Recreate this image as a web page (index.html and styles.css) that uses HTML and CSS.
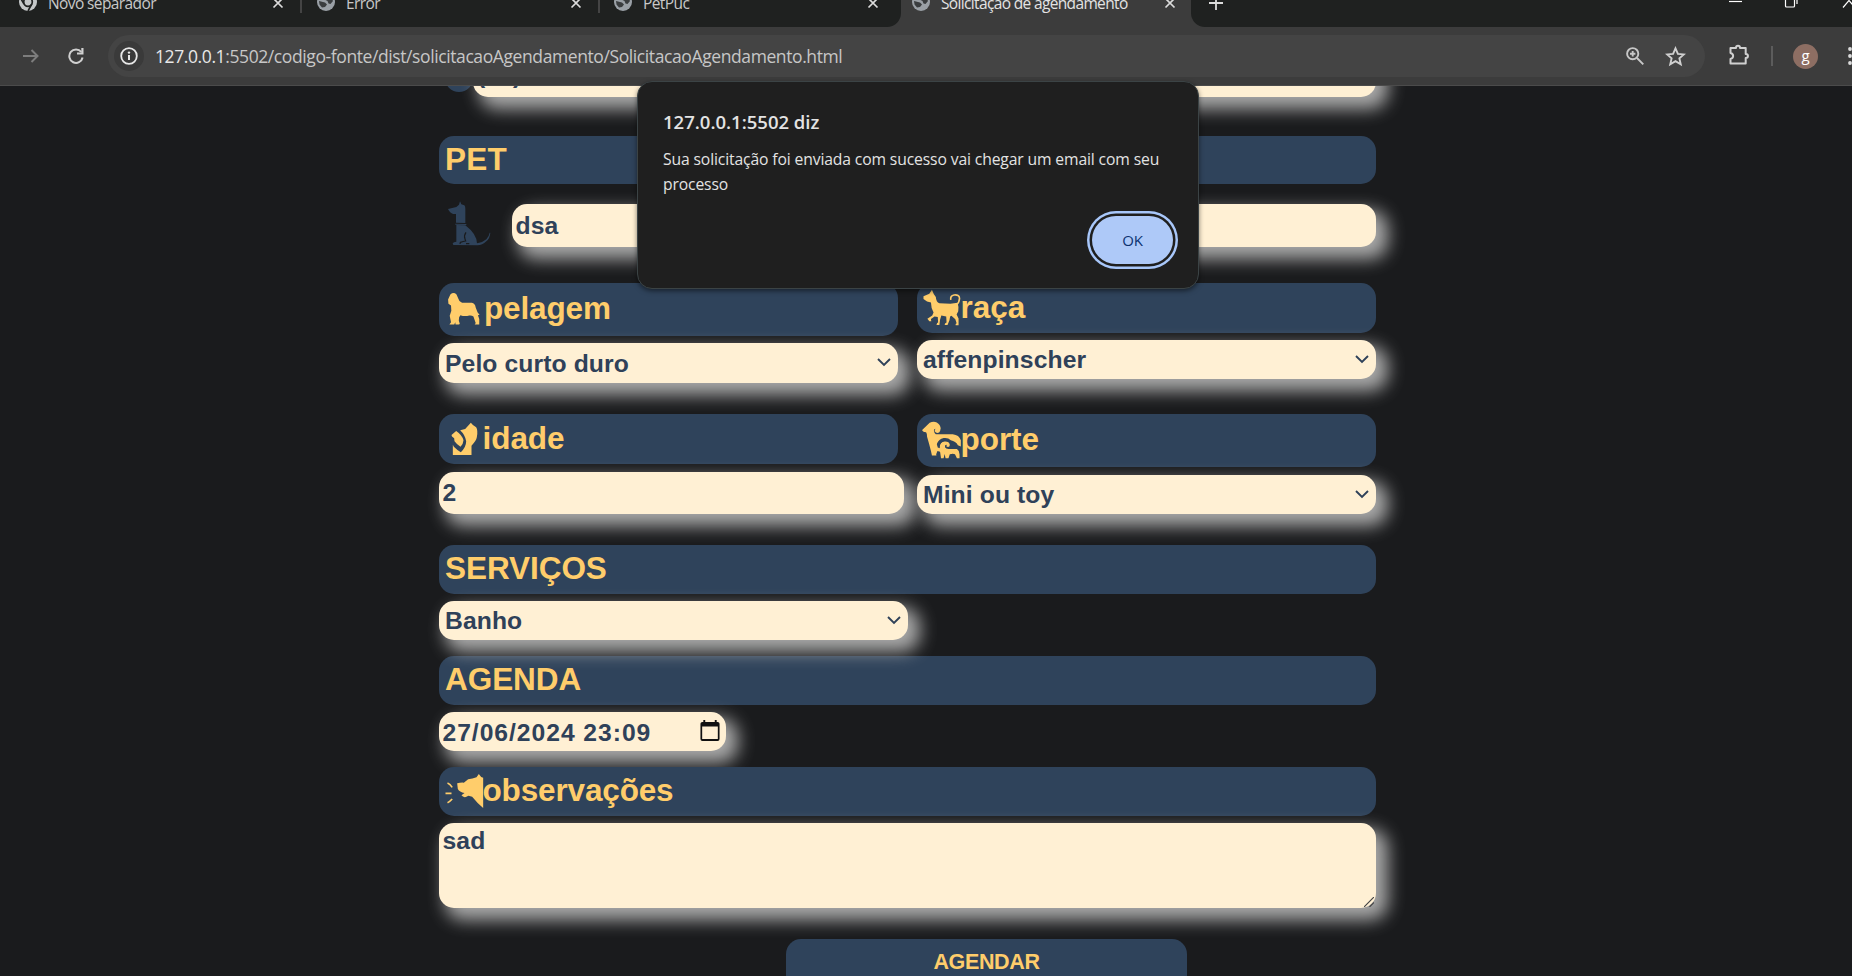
FILE: index.html
```html
<!DOCTYPE html>
<html lang="pt">
<head>
<meta charset="utf-8">
<title>Solicitação de agendamento</title>
<link rel="stylesheet" href="styles.css">
</head>
<body>
<svg class="defs" width="0" height="0">
  <symbol id="globe" viewBox="0 0 18 18"><circle cx="9" cy="9" r="9" fill="#9aa0a6"/><path d="M2 8l6 1.500 2 2-2 2.500-3 .5-2.500-3zM8 4l6 0 2 4-2.500 3-2-.5-1-2.500-3-1.500z" fill="#3a3d3f"/></symbol>
  <symbol id="close" viewBox="0 0 12 12"><path d="M1.500 1.500l9 9M10.500 1.500l-9 9" stroke="#dcdcdc" stroke-width="1.700"/></symbol>
  <symbol id="chev" viewBox="0 0 14 9"><path d="M1 1l6 6 6-6" fill="none" stroke="#2f4159" stroke-width="1.900"/></symbol>
</svg>
<div class="browser">
  <header class="chrome">
    <div class="tabstrip">
      <div class="tab tab-a"><svg class="fav" viewBox="0 0 18 18"><circle cx="9" cy="9" r="9" fill="#c4c7c8"/><circle cx="9" cy="9" r="4.300" fill="#c4c7c8" stroke="#1f2120" stroke-width="1.700"/><path d="M5 11L1.500 5M12.800 11L9 18M9 4.700h8" stroke="#1f2120" stroke-width="1.600"/></svg><span>Novo separador</span><svg class="x"><use href="#close"/></svg></div>
      <div class="tab tab-b"><svg class="fav"><use href="#globe"/></svg><span>Error</span><svg class="x"><use href="#close"/></svg></div>
      <div class="tab tab-c"><svg class="fav"><use href="#globe"/></svg><span>PetPuc</span><svg class="x"><use href="#close"/></svg></div>
      <div class="tab tab-d"><svg class="fav"><use href="#globe"/></svg><span>Solicitação de agendamento</span><svg class="x"><use href="#close"/></svg></div>
      <div class="rest">
        <svg class="plus" viewBox="0 0 14 14"><path d="M7 0v14M0 7h14" stroke="#dcdcdc" stroke-width="1.800"/></svg>
        <svg class="win" viewBox="0 0 123 20"><path d="M0 10.500h13" stroke="#fff" stroke-width="1.200"/><path d="M56.500 6h9v9a1 1 0 0 1-1 1h-7a1 1 0 0 1-1-1zM68 3v10" fill="none" stroke="#fff" stroke-width="1.200"/><path d="M114 16.500l12-14M114 2.500l12 14" stroke="#fff" stroke-width="1.200"/></svg>
      </div>
    </div>
    <div class="toolbar">
      <svg class="arrow" viewBox="0 0 16 14"><path d="M0 7h14M8.500 1l6 6-6 6" fill="none" stroke="#7d7d7d" stroke-width="2"/></svg>
      <svg class="reload" viewBox="0 0 16 16"><path d="M13.300 4A6.700 6.700 0 1 0 14.600 9.500" fill="none" stroke="#d0d0d0" stroke-width="2"/><path d="M15.500 0v6.500H9V4.600h4.300V0z" fill="#d0d0d0"/></svg>
      <div class="omnibox">
        <span class="info"><svg viewBox="0 0 18 18"><circle cx="9" cy="9" r="7.800" fill="none" stroke="#e8e8e8" stroke-width="1.800"/><path d="M9 8v5" stroke="#e8e8e8" stroke-width="2"/><circle cx="9" cy="5.600" r="1.200" fill="#e8e8e8"/></svg></span>
        <span class="url"><b>127.0.0.1</b>:5502/codigo-fonte/dist/solicitacaoAgendamento/SolicitacaoAgendamento.html</span>
        <svg class="mag" viewBox="0 0 18 18"><circle cx="6.700" cy="6.700" r="5.600" fill="none" stroke="#c7c7c7" stroke-width="1.900"/><path d="M6.700 4v5.400M4 6.700h5.400M11 11l6.300 6.300" stroke="#c7c7c7" stroke-width="1.900"/></svg>
        <svg class="star" viewBox="0 0 20 20"><path d="M10 2.200l2.300 5.300 5.700.5-4.300 3.800 1.300 5.600-5-3-5 3 1.300-5.600L2 8l5.700-.5z" fill="none" stroke="#d0d0d0" stroke-width="1.800"/></svg>
      </div>
      <svg class="puzzle" viewBox="0 0 21 22"><path d="M2 4h5.500c0-3 4-3 4 0h5.700v6c3 0 3 4 0 4v5.500H2v-4.500c3.500-1 3.500-5 0-6z" fill="none" stroke="#d0d0d0" stroke-width="2" stroke-linejoin="round"/></svg>
      <i class="sep"></i>
      <span class="avatar">g</span>
      <svg class="dots" viewBox="0 0 4 18"><g fill="#dcdcdc"><circle cx="2" cy="2" r="1.900"/><circle cx="2" cy="9" r="1.900"/><circle cx="2" cy="16" r="1.900"/></g></svg>
    </div>
  </header>
  <main class="page">
    <form class="form">
      <div class="phone"><i class="disc"></i><div class="field phone-field"><span>(31)</span></div></div>
      <h2 class="bar bar-pet">PET</h2>
      <div class="petrow">
        <svg class="dog" viewBox="45 360 141 144" fill="#2f435b"><path d="M87 374l3-10 4 9 9 3q3 3 3 10v43l-28-1v-26q-13 2-21-10l-3-5 25-6z"/><path d="M76 431l33 1 0 3-33-1z"/><path d="M79 435l27 1q34 26 35 54 17-2 28-12 8-8 10-20l2 0q-1 16-12 26-12 12-27 12l-72-1-2-5q3-4 11-5z"/><path d="M108 457q-7 10-3 20l2 6q-7 1-16 4l-1 5M108 491h10" fill="none" stroke="#1a1b1d" stroke-width="3.500"/></svg>
        <div class="field pet-field">dsa</div>
      </div>
      <div class="grid">
        <section>
          <h2 class="bar bar-coat"><svg viewBox="43.500 39 117 159" fill="#ffcd6b"><path d="M60 72Q70 64 79 72L84 84Q86 94 96 98L126 98Q136 100 138 112L144 128 150 135 145 136 149 148V165H135L138 160 131 140Q126 136 118 137 104 141 91 136L87 142 86 152 89 162Q88 165 76 165L75 158 72 165H57L62 158 58 138 63 122 62 106 54 101 53 88Z"/></svg>pelagem</h2>
          <div class="field f40">Pelo curto duro<svg class="chev"><use href="#chev"/></svg></div>
        </section>
        <section>
          <h2 class="bar bar-breed"><svg viewBox="127.500 39 117 150" fill="#ffcd6b"><path d="M129 78L147 70 155 58 161 72 167 80Q168 97 178 99L212 101 234 98Q238 110 236 124L231 134 237 146V167H228V163L231 161 227 149 215 138 211 140 209 152 203 166H194L196 161 200 159 199 140 184 137 180 150 178 166H169L171 160 174 159 173 142 163 140 152 148 153 155H147L141 147 156 137 160 128Q152 114 152 97L140 94 129 86Z"/><path d="M213 89Q211 76 223 74 239 72 240 84 240 96 230 105" fill="none" stroke="#ffcd6b" stroke-width="5"/></svg>raça</h2>
          <div class="field f39">affenpinscher<svg class="chev"><use href="#chev"/></svg></div>
        </section>
        <section>
          <h2 class="bar bar-age"><svg viewBox="43.500 432 114 150" fill="#ffcd6b"><path d="M89 481l15-4 17-19q6 8 16 14 6 10 2 30-2 11-16 25v28H67v-31l3 6q9 9 21 17 16-16 16-33-3-19-18-33z"/><path d="M77 483q18 12 22 28-1 13-9 19-10-5-18-16l-1-9q-9-6-8-10z"/></svg>idade</h2>
          <div class="field f42 age-field">2</div>
        </section>
        <section>
          <h2 class="bar bar-size"><svg viewBox="127.500 432 117 159" fill="#ffcd6b"><path d="M148 457q12-6 22-1 11 7 12 18-1 10-5 13-8 4-13-3-2-5 2-9-5 0-5 6 1 8 6 11l52 0q20 2 25 19l0 19-9-4q-7-12-22-15-8-9-22-7-15 3-21 18l3 11 6 2 1-10q5-11 14-11 13 0 16 10 1 9-8 7-5-2-1-6-7-1-6 7 3 5 11 6h26q8 5 8 16v12h-8l-6-12q-6-4-16 0l-4 12h-9l-3-13-3 13h-8l-3-20-8-2-4 10 1 4h-14l-3-14q-6-24-12-44 1-8-3-14-12-2-12-7z"/><path d="M174 528q8-15 21-16 15-1 20 10 4 6 15 6" fill="none" stroke="#2f435b" stroke-width="4"/></svg>porte</h2>
          <div class="field f39 size-field">Mini ou toy<svg class="chev"><use href="#chev"/></svg></div>
        </section>
      </div>
      <h2 class="bar">SERVIÇOS</h2>
      <div class="field f39 service-field">Banho<svg class="chev"><use href="#chev"/></svg></div>
      <h2 class="bar">AGENDA</h2>
      <div class="field f39 date-field">27/06/2024 23:09<svg class="cal" viewBox="0 0 20 22"><path d="M3 0h2v2h10V0h2v2h1a2 2 0 0 1 2 2v16a2 2 0 0 1-2 2H2a2 2 0 0 1-2-2V4a2 2 0 0 1 2-2h1zM1.800 6.700V20h16.400V6.700z" fill="#111" fill-rule="evenodd"/></svg></div>
      <h2 class="bar bar-notes"><svg viewBox="43.500 201 114 147" fill="#ffcd6b"><path d="M80 250q12-3 20-2l13-10q13-1 25-6l7-10 7 9 6 2v91q-16-13-33-34l-11-3-8 4q-8 2-13-5l9-7q-15-3-20-12z"/><path d="M51 249q8 3 14 13M45 280h18M51 308q7-3 14-11" fill="none" stroke="#ffcd6b" stroke-width="5"/></svg>observações</h2>
      <div class="field notes-field">sad<svg class="grip" viewBox="0 0 11 11"><path d="M0 11L11 0M6 11l5-5" stroke="#444" stroke-width="1.300"/></svg></div>
      <div class="submit">AGENDAR</div>
    </form>
  </main>
  <div class="dialog">
    <h1>127.0.0.1:5502 diz</h1>
    <p><span>Sua solicitação foi enviada com sucesso vai chegar um email com seu</span><br>processo</p>
    <div class="ok">OK</div>
  </div>
</div>
</body>
</html>
```
FILE: styles.css
```css
* { box-sizing: border-box; }
body { margin: 0; background: #1a1b1d; overflow: hidden; }
svg { display: block; flex: none; }
.defs { position: absolute; }
.browser { position: relative; width: 1852px; height: 976px; overflow: hidden; }

/* Browser frame */
.chrome { height: 86px; font-family: "Open Sans", "Noto Sans", sans-serif; background: #3c3c3c; border-bottom: 1px solid #4b4b4b; }
.tabstrip { display: flex; height: 27px; overflow: hidden; background: #3c3c3c; }
.tab, .rest { display: flex; align-items: center; height: 52px; margin-top: -25px; background: #1f2120; font-size: 15.500px; letter-spacing: -.6px; color: #c8c8c8; white-space: nowrap; }
.tab span { flex: 1; line-height: 20px; margin-top: 3px; }
.tab-a span { letter-spacing: -.6px; }
.fav { width: 18px; height: 18px; margin-right: 11px; margin-top: 2px; }
.x { width: 12px; height: 12px; margin-top: 4px; }
.tab-a { width: 302px; padding: 0 18px 0 19px; }
.tab-b { width: 298px; padding: 0 18px 0 15px; }
.tab-c { width: 301px; padding: 0 22px 0 14px; border-bottom-right-radius: 14px; }
.tab-a, .tab-b { position: relative; }
.tab-a::after, .tab-b::after { content: ""; position: absolute; right: 0; top: 14px; width: 2px; height: 24px; background: #444; }
.tab-d { width: 290px; padding: 0 15px 0 11px; background: #3c3c3c; color: #e3e3e3; }
.tab-d span { letter-spacing: -.65px; }
.rest { flex: 1; border-bottom-left-radius: 14px; justify-content: space-between; padding-left: 18px; }
.plus { width: 14px; height: 14px; margin-top: 3px; }
.win { width: 123px; height: 20px; margin-top: 0; }
.toolbar { display: flex; align-items: center; height: 58px; padding-left: 23px; }
.arrow { width: 16px; height: 14px; margin-right: 29px; }
.reload { width: 16px; height: 16px; margin-right: 24px; }
.omnibox { display: flex; align-items: center; width: 1597px; height: 42px; border-radius: 21px; background: #444; padding-left: 6px; }
.info { display: flex; align-items: center; justify-content: center; width: 30px; height: 30px; border-radius: 50%; background: #3a3a3a; }
.info svg { width: 18px; height: 18px; }
.url { flex: 1; margin-left: 11px; font-size: 17.500px; letter-spacing: -.4px; line-height: 24px; color: #c7c7c7; white-space: nowrap; }
.url b { font-weight: 400; color: #e8e8e8; }
.mag { width: 18px; height: 18px; margin-right: 21px; }
.star { width: 21px; height: 21px; margin-right: 19px; }
.puzzle { width: 22px; height: 22px; margin-left: 23px; margin-top: -2px; }
.sep { width: 2px; height: 20px; margin: 0 20px 0 21px; background: #5c5c5c; }
.avatar { width: 25px; height: 25px; border-radius: 50%; background: #8d6e63; color: #fff; font-size: 15px; line-height: 22px; text-align: center; }
.dots { width: 4px; height: 18px; margin-left: 30px; }

/* Booking form */
.page { height: 890px; overflow: hidden; font-family: "Liberation Sans", Arial, sans-serif; font-weight: 700; }
.form { width: 937px; margin-left: 439px; }
.phone { display: flex; height: 11px; padding-left: 6px; margin-bottom: 39px; }
.disc { width: 28px; height: 28px; margin-top: -22px; border-radius: 50%; background: #2f435b; }
.bar { display: flex; height: 49px; margin: 0 0 7px; padding-left: 6px; border-radius: 15px; background: #2f435b; color: #ffcd6b; font-size: 31.500px; letter-spacing: -.05px; line-height: 46px; }
.bar svg { width: 38px; height: 100%; margin-left: -.5px; overflow: visible; }
.field { position: relative; z-index: 1; height: 39px; padding-left: 6px; border-radius: 15px; background: #fff0d4; color: #2f4159; font-size: 24.700px; letter-spacing: .1px; line-height: 40px; white-space: nowrap; box-shadow: 9px 9px 17px 3px #a9a9a9; }
.phone-field { width: 903px; height: 43px; margin-top: -32px; line-height: 41px; padding-left: 4px; }
.bar-pet { height: 48px; margin-bottom: 20px; letter-spacing: .3px; }
.petrow { display: flex; height: 79px; }
.dog { width: 47px; height: 48px; margin: -4px 20px 0 6px; }
.pet-field { width: 864px; height: 43px; padding-left: 3.500px; line-height: 44px; }
.grid { display: grid; grid-template-columns: 459px 459px; grid-template-rows: 131px 131px; column-gap: 19px; }
.bar-coat { height: 53px; line-height: 50px; letter-spacing: -.15px; }
.bar-coat svg { margin-right: 1.500px; }
.bar-breed { height: 50px; line-height: 48px; }
.bar-age { height: 50px; margin-bottom: 8px; line-height: 48px; }
.bar-size { height: 53px; margin-bottom: 8px; line-height: 50px; }
.f40 { height: 40px; line-height: 42px; }
.f42 { height: 42px; line-height: 42px; }
.age-field { width: 465px; padding-left: 3.500px; }
.size-field { line-height: 39px; }
.chev { position: absolute; right: 7px; top: 15px; width: 14px; height: 9px; }
.service-field { width: 469px; margin-bottom: 16px; }
.date-field { display: flex; width: 287px; margin-bottom: 16px; padding-left: 3.500px; letter-spacing: .95px; line-height: 42px; }
.cal { width: 20px; height: 21px; margin: 8px 6px 0 auto; }
.bar-notes { position: relative; z-index: 1; letter-spacing: -.15px; }
.notes-field { height: 85px; padding-left: 3.500px; line-height: 36px; }
.grip { position: absolute; right: 2px; bottom: 1px; width: 10px; height: 10px; }
.submit { width: 401px; height: 60px; margin: 31px 0 0 347px; border-radius: 15px; background: #2f435b; color: #ffcd6b; font-size: 21.500px; letter-spacing: -.35px; line-height: 47px; text-align: center; }

/* Alert dialog */
.dialog { position: absolute; z-index: 5; left: 637px; top: 81px; width: 562px; height: 208px; padding: 26px 25px; border: 1px solid #3b4345; border-radius: 15px; background: #1f1f1f; color: #e3e3e3; font-family: "Open Sans", "Noto Sans", sans-serif; box-shadow: 0 2px 5px rgba(0,0,0,.5); }
.dialog h1 { margin: 0 0 11px; font-size: 18.500px; font-weight: 600; line-height: 28px; white-space: nowrap; }
.dialog p { margin: 0; font-size: 15.700px; letter-spacing: -.13px; line-height: 25px; white-space: nowrap; }
.ok { position: absolute; right: 25px; bottom: 24px; width: 81px; height: 48px; border-radius: 24px; background: #aec9f8; color: #0c3270; font-size: 15px; letter-spacing: -.3px; line-height: 49px; text-align: center; box-shadow: 0 0 0 2.500px #1f1f1f, 0 0 0 5px #a8c7fa; }
```
